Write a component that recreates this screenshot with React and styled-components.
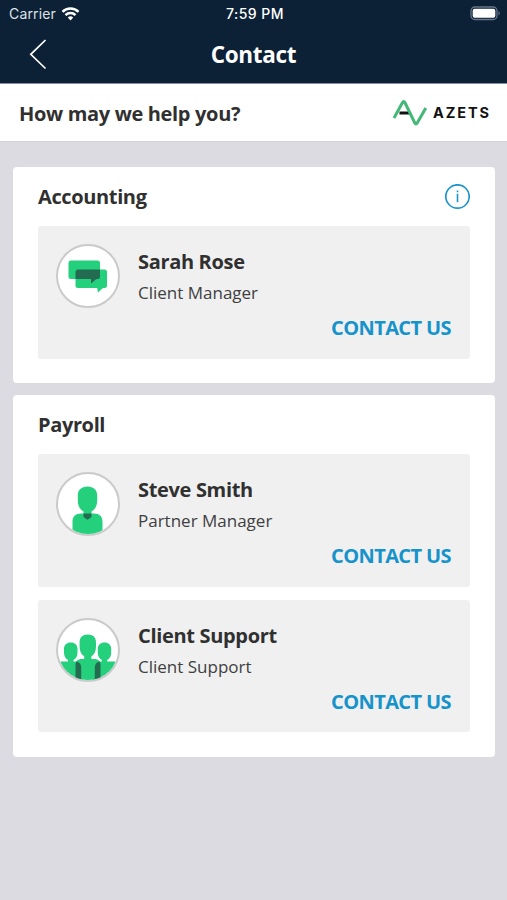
import { Fragment } from "react";
import styled, { createGlobalStyle } from "styled-components";

const sections = [
    {
        title: "Accounting",
        info: true,
        contacts: [{ name: "Sarah Rose", role: "Client Manager", icon: "chat" }],
    },
    {
        title: "Payroll",
        contacts: [
            { name: "Steve Smith", role: "Partner Manager", icon: "person" },
            { name: "Client Support", role: "Client Support", icon: "team" },
        ],
    },
];

// avatar drawings, all on a 64x64 circle
function ChatIcon() {
    return (
        <svg width="64" height="64" viewBox="0 0 64 64">
            <g fill="#25d07c">
                <rect x="12.500" y="16.500" width="31.500" height="18.500" rx="2.500" />
                <rect x="19.500" y="25.500" width="31.500" height="18.500" rx="2.500" />
                <path d="M41 43.500h6.500L42 48.500z" />
            </g>
            <path
                fill="#236b51"
                d="M22 25.500h22v7.500a2 2 0 0 1-2 2h-1.500L35 39.500V35H19.500v-7a2.500 2.500 0 0 1 2.500-2.500z"
            />
        </svg>
    );
}

function PersonIcon() {
    return (
        <svg width="64" height="64" viewBox="0 0 64 64">
            <path
                fill="#25d07c"
                d="M31.500 14.500c6.200 0 9.700 3.500 9.700 9v5c0 5.500-2.200 9-5.700 11V41.500h2.500c5.500 0 8.500 3 8.500 8V64h-30V49.500c0-5 3-8 8.500-8h2.500v-2c-3.500-2-5.700-5.500-5.700-11v-5c0-5.500 3.500-9 9.700-9z"
            />
            <path fill="#236b51" d="M27.500 41.500h8v2.500c0 1-.5 1.500-1.300 2L31.500 47.800 28.800 46c-.8-.5-1.300-1-1.300-2z" />
        </svg>
    );
}

function TeamIcon() {
    return (
        <svg width="64" height="64" viewBox="0 0 64 64">
            <g fill="#25d07c">
                <path d="M14.800 24.500c4.200 0 6.700 2.400 6.700 6.500v3.500c0 3.700-1.400 6.200-4 7.500v1.500H20c4 0 6 2 6 6V64H0V46c2-1.700 4-2.500 7-2.500h5V42c-2.500-1.300-4-3.800-4-7.500V31c0-4.100 2.600-6.500 6.800-6.500z" />
                <path d="M48.500 24.500c4.200 0 6.700 2.400 6.700 6.500v3.500c0 3.700-1.400 6.200-4 7.500v1.500H57c3 0 5 .8 7 2.500v18H37V49.500c0-4 2-6 6-6h2.800V42c-2.500-1.300-4-3.800-4-7.500V31c0-4.100 2.600-6.500 6.700-6.500z" />
                <path d="M31.800 16.500c5.300 0 8.200 2.800 8.200 8v4c0 4.700-1.600 8-4.600 9.700V41h2.600c4.400 0 6.500 2 6.500 6.500V64H19.500V47.500c0-4.500 2.100-6.500 6.500-6.500h2.200v-2.800c-3-1.700-4.600-5-4.600-9.700v-4c0-5.200 2.900-8 8.200-8z" />
            </g>
            <path fill="#236b51" d="M20.500 43.500c3 .5 4.700 2.500 4.700 6V64h-5.700V48c0-1.800.2-3.300 1-4.500z" />
            <path fill="#236b51" d="M43.500 43.500c-3 .5-4.700 2.500-4.700 6V64h5.700V48c0-1.800-.2-3.300-1-4.500z" />
        </svg>
    );
}

const icons = { chat: ChatIcon, person: PersonIcon, team: TeamIcon };

function ContactCard({ contact }) {
    const Icon = icons[contact.icon];
    return (
        <Contact>
            <Avatar>
                <Icon />
            </Avatar>
            <Details>
                <Name>{contact.name}</Name>
                <Role>{contact.role}</Role>
                <ContactButton>CONTACT US</ContactButton>
            </Details>
        </Contact>
    );
}

export default function App() {
    return (
        <Fragment>
            <GlobalStyle />
            <Header>
                <StatusBar>
                    <Carrier>
                        Carrier
                        <svg width="19" height="14" viewBox="0 0 18 14" fill="none" stroke="#fff" strokeWidth="2.500">
                            <path d="M1 4.900a11.400 11.400 0 0 1 16 0" />
                            <path d="M4 8.200a7 7 0 0 1 10 0" />
                            <path d="M9 13.500l-2.700-2.900a3.800 3.800 0 0 1 5.400 0z" fill="#fff" stroke="none" />
                        </svg>
                    </Carrier>
                    <Time>7:59 PM</Time>
                    <Battery>
                        <svg width="31" height="15" viewBox="0 0 31 15">
                            <rect x="1" y="1" width="26" height="12.500" rx="3.800" fill="none" stroke="#66758a" strokeWidth="1.300" />
                            <rect x="2.700" y="2.700" width="22.600" height="9.100" rx="2" fill="#fff" />
                            <path d="M28.500 5.200c1.700.5 1.700 3.600 0 4.100z" fill="#66758a" />
                        </svg>
                    </Battery>
                </StatusBar>
                <NavBar>
                    <BackButton aria-label="Back">
                        <svg width="18" height="31" viewBox="0 0 18 31" fill="none" stroke="#fff" strokeWidth="1.700">
                            <path d="M16.500 1L1.800 15.300l14.700 14.200" />
                        </svg>
                    </BackButton>
                    <PageTitle>Contact</PageTitle>
                </NavBar>
            </Header>
            <Intro>
                <Question>How may we help you?</Question>
                <Brand>
                    <svg width="36" height="28" viewBox="0 0 36 28" fill="none">
                        <path d="M7.500 14h10" stroke="#111" strokeWidth="3" />
                        <path
                            d="M2 19L10.500 3.500q1.200-1.800 2.400 0L22.800 24q1.200 1.800 2.400 0L33.800 9"
                            stroke="#43b878"
                            strokeWidth="3"
                        />
                    </svg>
                    <BrandName>AZETS</BrandName>
                </Brand>
            </Intro>
            <Content>
                {sections.map((section) => (
                    <Section key={section.title}>
                        <SectionHeader>
                            <SectionTitle>{section.title}</SectionTitle>
                            {section.info && (
                                <svg width="26" height="26" viewBox="0 0 26 26" fill="none" stroke="#1b95c9">
                                    <circle cx="13.500" cy="12.500" r="11.700" strokeWidth="1.700" />
                                    <path d="M13.500 9.800v8.500M13.500 6.500v1.800" strokeWidth="1.600" />
                                </svg>
                            )}
                        </SectionHeader>
                        <ContactList>
                            {section.contacts.map((contact) => (
                                <ContactCard key={contact.name} contact={contact} />
                            ))}
                        </ContactList>
                    </Section>
                ))}
            </Content>
        </Fragment>
    );
}

// Styled components
const GlobalStyle = createGlobalStyle`
    * {
        box-sizing: border-box;
    }

    body {
        margin: 0;
        min-height: 100vh;
        background-color: #dcdbe1;
        color: #303030;
        font-family: "Open Sans", sans-serif;
    }

    svg {
        display: block;
        flex-shrink: 0;
    }
`;

const Header = styled.header`
    height: 84px;
    background-color: #0d2136;
    border-bottom: 1px solid #8490a0;
    color: #fff;
`;

const StatusBar = styled.div`
    display: grid;
    grid-template-columns: 1fr auto 1fr;
    align-items: center;
    height: 27px;
    padding: 0 6px 0 9px;
    font-family: Inter, sans-serif;
    font-size: 14px;
`;

const Carrier = styled.div`
    display: flex;
    align-items: center;
    gap: 5px;
    color: #dde2e7;
    letter-spacing: 0.15px;
`;

const Time = styled.div`
    font-weight: 500;
    letter-spacing: 0.5px;
`;

const Battery = styled.div`
    justify-self: end;
`;

const NavBar = styled.div`
    display: grid;
    grid-template-columns: 1fr auto 1fr;
    align-items: center;
    height: 55px;
    padding: 0 29px;
`;

const BackButton = styled.button`
    justify-self: start;
    padding: 0;
    border: none;
    background: none;
    cursor: pointer;
`;

const PageTitle = styled.h1`
    margin: 0;
    font-size: 22.5px;
    font-weight: 700;
    letter-spacing: -0.3px;
`;

const Intro = styled.div`
    display: flex;
    align-items: center;
    justify-content: space-between;
    height: 58px;
    padding: 0 16px 0 19px;
    background-color: #fff;
    border-bottom: 1px solid #d2d2d5;
`;

const Question = styled.p`
    margin: 0;
    padding-top: 1px;
    font-size: 20px;
    font-weight: 700;
    letter-spacing: -0.33px;
`;

const Brand = styled.div`
    display: flex;
    align-items: center;
    gap: 5px;
`;

const BrandName = styled.span`
    color: #111;
    font-family: Inter, sans-serif;
    font-size: 14.5px;
    font-weight: 700;
    letter-spacing: 1.9px;
`;

const Content = styled.main`
    display: flex;
    flex-direction: column;
    gap: 12px;
    padding: 25px 12px 0 13px;
`;

const Section = styled.section`
    padding: 0 25px 24.5px;
    background-color: #fff;
    border-radius: 4px;
`;

const SectionHeader = styled.div`
    display: flex;
    align-items: center;
    justify-content: space-between;
    height: 59px;
`;

const SectionTitle = styled.h2`
    margin: 0;
    font-size: 20px;
    font-weight: 700;
    letter-spacing: -0.37px;
`;

const ContactList = styled.div`
    display: flex;
    flex-direction: column;
    gap: 13px;
`;

const Contact = styled.div`
    display: flex;
    gap: 18px;
    height: 132.5px;
    padding: 18px 19px 0 18px;
    background-color: #f0f0f0;
    border-radius: 3px;
`;

const Avatar = styled.div`
    display: flex;
    align-items: center;
    justify-content: center;
    flex-shrink: 0;
    width: 64px;
    height: 64px;
    overflow: hidden;
    border: 2px solid #cacaca;
    border-radius: 50%;
    background-color: #fff;
`;

const Details = styled.div`
    display: flex;
    flex: 1;
    flex-direction: column;
    padding-top: 1px;
`;

const Name = styled.h3`
    margin: 0;
    font-size: 20px;
    font-weight: 700;
    line-height: 34px;
    letter-spacing: -0.33px;
`;

const Role = styled.p`
    margin: 0;
    color: #404040;
    font-size: 17px;
    line-height: 28px;
`;

const ContactButton = styled.button`
    align-self: flex-end;
    margin-top: 6px;
    padding: 0;
    border: none;
    background: none;
    color: #1593ca;
    font-family: inherit;
    font-size: 20px;
    font-weight: 700;
    line-height: 30px;
    letter-spacing: -0.6px;
    cursor: pointer;
`;
